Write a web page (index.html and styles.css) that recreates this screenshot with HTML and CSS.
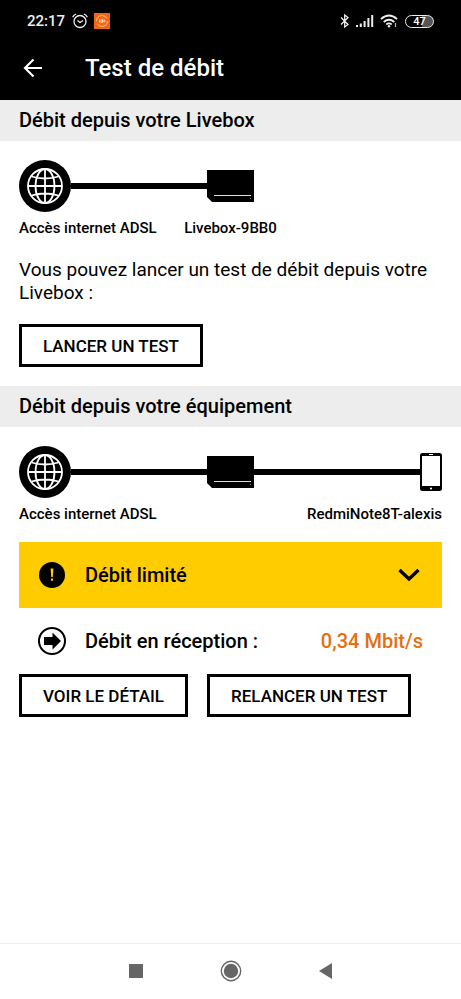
FILE: index.html
```html
<!DOCTYPE html>
<html lang="fr">
<head>
<meta charset="utf-8">
<meta name="viewport" content="width=device-width, initial-scale=1">
<title>Test de débit</title>
<link rel="stylesheet" href="styles.css">
</head>
<body>
<svg class="defs" aria-hidden="true">
  <symbol id="globe" viewBox="0 0 52 52">
    <circle cx="26" cy="26" r="26"/>
    <g fill="none" stroke="#fff" stroke-width="1.8">
      <circle cx="26" cy="26" r="17"/>
      <ellipse cx="26" cy="26" rx="9.5" ry="17"/>
      <path d="M26 9v34M9 26h34M12.500 16.500q13.500 4 27 0M12.500 35.500q13.500-4 27 0"/>
    </g>
  </symbol>
  <symbol id="livebox" viewBox="0 0 47 32">
    <path d="M0 0h47v32H5l-5-5z"/>
    <path d="M7 25.500h37" stroke="#ddd"/>
    <path d="M43 28.500h1" stroke="#777"/>
  </symbol>
</svg>
<header class="top">
  <div class="status">
    <span class="clock">22:17</span>
    <svg width="16" height="16" viewBox="0 0 16 16" fill="none" stroke="#eee" stroke-width="1.3">
      <circle cx="8" cy="8.500" r="6"/><path d="M5.500 7.500L8 9.500l3-2M.7 4.200Q1.500 2 4 1M15.300 4.200Q14.500 2 12 1"/>
    </svg>
    <svg width="16" height="16" viewBox="0 0 16 16">
      <path d="M0 0h16v16H0z" fill="#f26511"/>
      <circle cx="8" cy="8" r="5.500" fill="none" stroke="#ffc49d" stroke-dasharray="14 3"/>
      <path d="M5.500 6.500v3M7 6.500h1.500v3H7zM10 6.500v3M10 8h1.500" fill="none" stroke="#ffe7d8" stroke-width=".9"/>
    </svg>
    <span class="spacer"></span>
    <svg width="10" height="16" viewBox="0 0 10 16" fill="none" stroke="#eee" stroke-width="1.300">
      <path d="M1 4.500l7 7L4.700 14V2L8 4.500l-7 7"/>
    </svg>
    <svg width="18" height="14" viewBox="0 0 18 14" fill="#eee">
      <path d="M0 11h2v2H0zM3.800 9.500h2V13h-2zM7.600 7h2v6h-2zM11.400 4h2v9h-2zM15.200 1h2v12h-2z"/>
    </svg>
    <svg width="19" height="14" viewBox="0 0 19 14" fill="none" stroke="#eee" stroke-width="1.800">
      <path d="M1 5q8-7 16 0M3.700 8q5.300-4.500 10.600 0M6.300 10.500q2.700-2.200 5.400 0"/>
      <circle cx="9" cy="12.300" r="1.200" fill="#eee" stroke="none"/><path d="M15.500 9v4" stroke-width="1.200" stroke="#bbb"/>
    </svg>
    <span class="battery">47</span>
  </div>
  <div class="bar">
    <button class="back" type="button" aria-label="Retour">
      <svg width="20" height="20" viewBox="0 0 20 20" fill="none" stroke="#fff" stroke-width="2.200"><path d="M19 10H2.500M10.500 1.500L2 10l8.500 8.500"/></svg>
    </button>
    <h1>Test de débit</h1>
  </div>
</header>
<main>
  <section>
    <h2>Débit depuis votre Livebox</h2>
    <div class="content">
      <div class="chain">
        <div class="leg"><svg class="globe"><use href="#globe"/></svg><span class="wire"></span></div>
        <svg class="livebox"><use href="#livebox"/></svg>
      </div>
      <div class="labels"><span>Accès internet ADSL</span><span>Livebox-9BB0</span></div>
      <p>Vous pouvez lancer un test de débit depuis votre Livebox :</p>
      <div class="actions first"><button class="btn" type="button">LANCER UN TEST</button></div>
    </div>
  </section>
  <section>
    <h2>Débit depuis votre équipement</h2>
    <div class="content">
      <div class="chain">
        <div class="leg"><svg class="globe"><use href="#globe"/></svg><span class="wire"></span></div>
        <svg class="livebox"><use href="#livebox"/></svg>
        <div class="leg"><span class="wire"></span>
          <svg width="22" height="38" viewBox="0 0 22 38"><rect width="22" height="38" rx="2.500"/><path d="M2 3h18v30H2z" fill="#fff"/><path d="M9 1.500h4" stroke="#fff"/><circle cx="11" cy="35.500" r="1.100" fill="#fff"/></svg>
        </div>
      </div>
      <div class="labels"><span>Accès internet ADSL</span><span></span><span>RedmiNote8T-alexis</span></div>
      <button class="alert" type="button">
        <svg width="28" height="28" viewBox="0 0 28 28"><circle cx="14" cy="14" r="13"/><path d="M12.600 7.500h2.800l-.6 8.500h-1.600zM13 17.500h2v2.300h-2z" fill="#fc0"/></svg>
        <span>Débit limité</span>
        <svg class="chevron" width="22" height="14" viewBox="0 0 22 14" fill="none" stroke="#000" stroke-width="3.400"><path d="M1.500 2L11 11l9.500-9"/></svg>
      </button>
      <div class="result">
        <svg width="28" height="28" viewBox="0 0 28 28"><circle cx="14" cy="14" r="13" fill="#fff" stroke="#000" stroke-width="2"/><path d="M6 10h8.500V5.500L23 14l-8.500 8.500V18H6z"/></svg>
        <span>Débit en réception :</span>
        <strong>0,34 Mbit/s</strong>
      </div>
      <div class="actions"><button class="btn" type="button">VOIR LE DÉTAIL</button><button class="btn" type="button">RELANCER UN TEST</button></div>
    </div>
  </section>
</main>
<nav>
  <button type="button" aria-label="Applications récentes"><svg width="22" height="22" viewBox="0 0 22 22"><path d="M4 4h14v14H4z"/></svg></button>
  <button type="button" aria-label="Accueil"><svg width="22" height="22" viewBox="0 0 22 22"><circle cx="11" cy="11" r="9.700" fill="none" stroke="#666" stroke-width="1.400"/><circle cx="11" cy="11" r="7.200"/></svg></button>
  <button type="button" aria-label="Précédent"><svg width="22" height="22" viewBox="0 0 22 22"><path d="M4 11l13-8v16z"/></svg></button>
</nav>
</body>
</html>
```
FILE: styles.css
```css
* { box-sizing: border-box; }
body {
  margin: 0;
  min-height: 100vh;
  display: flex;
  flex-direction: column;
  background: #fff;
  color: #000;
  font: 500 15px/20px Roboto, sans-serif;
}
button {
  font: inherit;
  color: inherit;
  background: none;
  border: 0;
  padding: 0;
}
svg { display: block; flex: none; }
.defs { position: absolute; width: 0; height: 0; }

.top { background: #000; color: #fff; }
.status {
  display: flex;
  align-items: center;
  gap: 6px;
  height: 42px;
  padding: 0 27px;
}
.clock { font-size: 15px; color: #eee; margin-right: 1px; }
.spacer { flex: 1; }
.battery {
  width: 29px;
  height: 13px;
  border: 1px solid #eee;
  border-radius: 7px;
  background: linear-gradient(90deg, #000 60%, #555 60%);
  font-size: 11px;
  line-height: 11px;
  text-align: center;
}
.bar {
  display: flex;
  align-items: center;
  gap: 42px;
  height: 58px;
  padding: 0 23px 6px;
}
h1, h2 { margin: 0; font-weight: 500; }
h1 { font-size: 24px; line-height: 32px; }
h2 {
  padding: 0 19px;
  background: #ededed;
  font-size: 20px;
  line-height: 41px;
}

main { flex: 1; }
.content { padding: 19px; }
.chain {
  display: grid;
  grid-template-columns: 1fr auto 1fr;
  align-items: center;
}
.leg { display: flex; align-items: center; }
.wire { flex: 1; height: 6px; background: #000; }
.globe { width: 52px; height: 52px; }
.livebox { width: 47px; height: 32px; }
.labels {
  display: grid;
  grid-template-columns: repeat(3, 1fr);
  margin-top: 6px;
  white-space: nowrap;
}
.labels > :nth-child(2) { text-align: center; }
.labels > :nth-child(3) { text-align: right; }
p {
  margin: 20px 0 0;
  font-size: 19px;
  font-weight: 400;
  line-height: 23px;
}
.actions { display: flex; gap: 19px; }
.first { margin-top: 20px; }
.btn {
  height: 43px;
  padding: 0 21px;
  border: 3px solid #000;
  font-size: 17px;
}
.alert, .result {
  display: flex;
  align-items: center;
  gap: 19px;
  width: 100%;
  height: 66px;
  padding: 0 19px;
  font-size: 20px;
}
.alert { margin-top: 18px; background: #fc0; }
.chevron { margin-left: auto; margin-right: 3px; }
.result strong { margin-left: auto; font-weight: 500; color: #e37012; }

nav {
  display: flex;
  justify-content: center;
  gap: 73px;
  padding: 16px 0 17px;
  border-top: 1px solid #eee;
}
nav svg { fill: #666; }
```
